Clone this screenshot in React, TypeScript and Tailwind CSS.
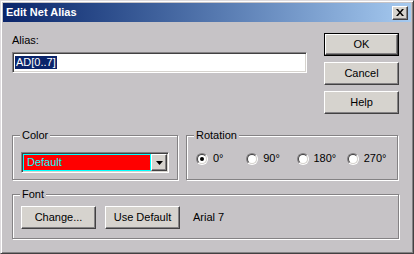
import React from "react";

const face = "bg-[#d6d3ce]";

function Btn({ label, def = false, w = "w-[75px]" }: { label: string; def?: boolean; w?: string }) {
  const inner = (
    <div
      className={`${face} h-full w-full flex items-center justify-center border border-t-white border-l-white border-r-[#424142] border-b-[#424142] shadow-[inset_-1px_-1px_0_#848284]`}
    >
      {label}
    </div>
  );
  if (def) {
    return <div className={`${w} h-[23px] border border-black`}>{inner}</div>;
  }
  return <div className={`${w} h-[23px]`}>{inner}</div>;
}

function Group({ title, className, children }: { title: string; className: string; children: React.ReactNode }) {
  return (
    <div
      className={`${className} h-[45px] border border-[#848284] shadow-[inset_1px_1px_0_#fff,1px_1px_0_#fff]`}
    >
      <span className="block w-fit -mt-[8px] ml-[7px] px-[2px] leading-[14px] bg-[#c6c3c6]">{title}</span>
      {children}
    </div>
  );
}

function Radio({ label, checked = false }: { label: string; checked?: boolean }) {
  return (
    <div className="w-[53px] flex items-center gap-[5px]">
      <div className="w-[12px] h-[12px] rounded-full border border-t-[#848284] border-l-[#848284] border-r-white border-b-white">
        <div className="w-full h-full rounded-full border border-t-[#424142] border-l-[#424142] border-r-[#d6d3ce] border-b-[#d6d3ce] bg-white flex items-center justify-center">
          {checked && <div className="w-[4px] h-[4px] rounded-full bg-black" />}
        </div>
      </div>
      <span>{label}</span>
    </div>
  );
}

export default function App() {
  return (
    <div
      className="w-[414px] h-[254px] bg-[#c6c3c6] flex flex-col p-[2px] border border-t-[#dedbde] border-l-[#dedbde] border-r-[#424142] border-b-[#424142] shadow-[inset_1px_1px_0_#fff,inset_-1px_-1px_0_#848284] text-[11px] leading-[13px] text-black"
      style={{ fontFamily: '"Liberation Sans", Arial, sans-serif' }}
    >
      {/* caption */}
      <div className="h-[19px] shrink-0 flex items-center justify-between bg-gradient-to-r from-[#0a246a] to-[#a6caf0]">
        <span className="pl-[3px] font-bold text-white text-[11px]">Edit Net Alias</span>
        <div className={`mr-[3px] w-[16px] h-[14px] ${face} border border-t-white border-l-white border-r-[#424142] border-b-[#424142] shadow-[inset_-1px_-1px_0_#848284] flex items-center justify-center`}>
          <svg width="8" height="7" viewBox="0 0 8 7">
            <path d="M0 0h2l2 2.5L6 0h2L5 3.5 8 7H6L4 4.5 2 7H0l3-3.5z" fill="#000" />
          </svg>
        </div>
      </div>

      {/* body */}
      <div className="flex-1 flex flex-col pt-[11px] pl-[9px] pr-[12px]">
        <div className="flex justify-between">
          <div className="w-[295px] pt-[1px]">
            <div className="leading-[13px]">Alias:</div>
            <div className="mt-[5px] h-[21px] bg-white border border-t-[#848284] border-l-[#848284] border-r-white border-b-white shadow-[inset_1px_1px_0_#424142,inset_-1px_-1px_0_#d6d3ce] flex items-center pl-[2px]">
              <span className="bg-[#0a246a] text-white px-[1px] leading-[13px]">AD[0..7]</span>
            </div>
          </div>
          <div className="flex flex-col gap-[6px]">
            <Btn label="OK" def />
            <Btn label="Cancel" />
            <Btn label="Help" />
          </div>
        </div>

        <div className="mt-[21px] flex gap-[8px]">
          <Group title="Color" className="w-[166px]">
            <div className="mt-[10px] ml-[8px] w-[148px] h-[21px] border border-t-[#848284] border-l-[#848284] border-r-white border-b-white shadow-[inset_1px_1px_0_#424142,inset_-1px_-1px_0_#d6d3ce] p-[1px] flex">
              <div className="flex-1 bg-[#ff0000] border border-[#00ffff] text-[#00ffff] flex items-center pl-[3px]">
                Default
              </div>
              <div className={`w-[16px] ${face} border border-t-white border-l-white border-r-[#424142] border-b-[#424142] shadow-[inset_-1px_-1px_0_#848284] flex items-center justify-center`}>
                <svg width="7" height="4" viewBox="0 0 7 4">
                  <path d="M0 0h7L3.5 4z" fill="#000" />
                </svg>
              </div>
            </div>
          </Group>
          <Group title="Rotation" className="w-[212px]">
            <div className="mt-[10px] pl-[9px] flex items-center h-[13px]">
              <Radio label="0°" checked />
              <Radio label="90°" />
              <Radio label="180°" />
              <Radio label="270°" />
            </div>
          </Group>
        </div>

        <Group title="Font" className="mt-[14px] w-[387px]">
          <div className="mt-[5px] ml-[8px] flex items-center">
            <Btn label="Change..." />
            <div className="ml-[9px]">
              <Btn label="Use Default" />
            </div>
            <span className="ml-[13px]">Arial 7</span>
          </div>
        </Group>
      </div>
    </div>
  );
}
